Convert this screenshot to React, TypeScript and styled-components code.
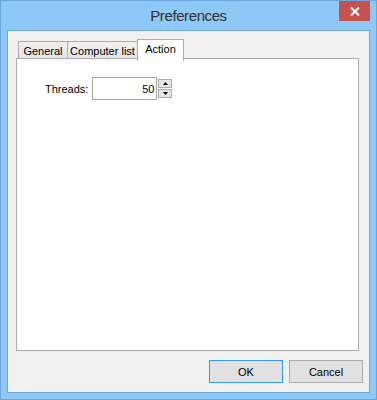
import React from "react";
import styled, { createGlobalStyle } from "styled-components";

const GlobalStyle = createGlobalStyle`
  html, body {
    margin: 0;
    padding: 0;
    background: #ffffff;
  }
  * {
    box-sizing: border-box;
  }
`;

const tabs = [
  { label: "General", width: 50 },
  { label: "Computer list", width: 71 },
  { label: "Action", width: 47 },
];

function App() {
  const active = "Action";

  return (
    <>
      <GlobalStyle />
      <Window>
        <TitleBar>
          <span />
          <Title>Preferences</Title>
          <CloseButton aria-label="Close">
            <svg width="10" height="9" viewBox="0 0 10 9">
              <path
                d="M1 0.5 L9 8.5 M9 0.5 L1 8.5"
                stroke="#ffffff"
                strokeWidth="2"
                fill="none"
              />
            </svg>
          </CloseButton>
        </TitleBar>
        <Client>
          <TabStrip>
            {tabs.map((t) => (
              <Tab key={t.label} $active={t.label === active} $width={t.width}>
                {t.label}
              </Tab>
            ))}
          </TabStrip>
          <Panel>
            <FieldRow>
              <FieldLabel>Threads:</FieldLabel>
              <NumberBox>50</NumberBox>
              <Spinner>
                <SpinButton>
                  <svg width="5" height="3" viewBox="0 0 5 3">
                    <path d="M2.5 0 L5 3 L0 3 Z" fill="#000" />
                  </svg>
                </SpinButton>
                <SpinButton>
                  <svg width="5" height="3" viewBox="0 0 5 3">
                    <path d="M0 0 L5 0 L2.5 3 Z" fill="#000" />
                  </svg>
                </SpinButton>
              </Spinner>
            </FieldRow>
          </Panel>
          <ButtonRow>
            <DialogButton $primary>OK</DialogButton>
            <DialogButton>Cancel</DialogButton>
          </ButtonRow>
        </Client>
      </Window>
    </>
  );
}

export default App;

const Window = styled.div`
  width: 377px;
  height: 400px;
  border: 1px solid #69a6dc;
  background: #8dc8f7;
  display: flex;
  flex-direction: column;
  padding: 0 6px 6px 6px;
  font-family: "Liberation Sans", Arial, sans-serif;
`;

const TitleBar = styled.div`
  height: 29px;
  display: grid;
  grid-template-columns: 31px 1fr 31px;
  align-items: start;
`;

const Title = styled.div`
  text-align: center;
  font-size: 15px;
  letter-spacing: -0.4px;
  color: #333333;
  line-height: 30px;
`;

const CloseButton = styled.div`
  width: 31px;
  height: 20px;
  background: #c75050;
  display: flex;
  align-items: center;
  justify-content: center;
`;

const Client = styled.div`
  flex: 1;
  border: 1px solid #6da8dc;
  background: #f0f0f0;
  display: flex;
  flex-direction: column;
  padding: 8px 6px 9px 8px;
`;

const TabStrip = styled.div`
  height: 20px;
  display: flex;
  align-items: flex-end;
  padding-left: 2px;
`;

const Tab = styled.div<{ $active?: boolean; $width: number }>`
  width: ${(p) => p.$width}px;
  height: ${(p) => (p.$active ? 22 : 18)}px;
  margin-bottom: ${(p) => (p.$active ? -2 : 0)}px;
  margin-left: -1px;
  &:first-child {
    margin-left: 0;
  }
  position: relative;
  z-index: ${(p) => (p.$active ? 2 : 1)};
  border: 1px solid #acacac;
  border-bottom: ${(p) => (p.$active ? "none" : "1px solid #acacac")};
  background: ${(p) =>
    p.$active ? "#ffffff" : "linear-gradient(#f0f0f0, #e5e5e5)"};
  font-size: 11px;
  color: #000000;
  display: flex;
  align-items: ${(p) => (p.$active ? "flex-start" : "center")};
  padding-top: ${(p) => (p.$active ? 3 : 1)}px;
  justify-content: center;
  white-space: nowrap;
`;

const Panel = styled.div`
  flex: 1;
  margin-right: 4px;
  margin-top: -1px;
  border: 1px solid #acacac;
  background: #ffffff;
  padding: 18px 0 0 28px;
`;

const FieldRow = styled.div`
  display: flex;
  align-items: center;
`;

const FieldLabel = styled.div`
  font-size: 11px;
  color: #000000;
  margin-right: 4px;
`;

const NumberBox = styled.div`
  width: 65px;
  height: 23px;
  border: 1px solid #a5a5a5;
  background: #ffffff;
  font-size: 11px;
  color: #000000;
  display: flex;
  align-items: center;
  justify-content: flex-end;
  padding-right: 2px;
`;

const Spinner = styled.div`
  display: flex;
  flex-direction: column;
  gap: 1px;
  margin-left: 1px;
`;

const SpinButton = styled.div`
  width: 14px;
  height: 9px;
  border: 1px solid #acacac;
  background: #e5e5e5;
  display: flex;
  align-items: center;
  justify-content: center;
`;

const ButtonRow = styled.div`
  display: flex;
  justify-content: flex-end;
  gap: 6px;
  margin-top: 9px;
`;

const DialogButton = styled.div<{ $primary?: boolean }>`
  width: 74px;
  height: 23px;
  border: 1px solid ${(p) => (p.$primary ? "#3399ff" : "#acacac")};
  background: #e1e1e1;
  font-size: 11px;
  color: #000000;
  display: flex;
  align-items: center;
  justify-content: center;
`;
